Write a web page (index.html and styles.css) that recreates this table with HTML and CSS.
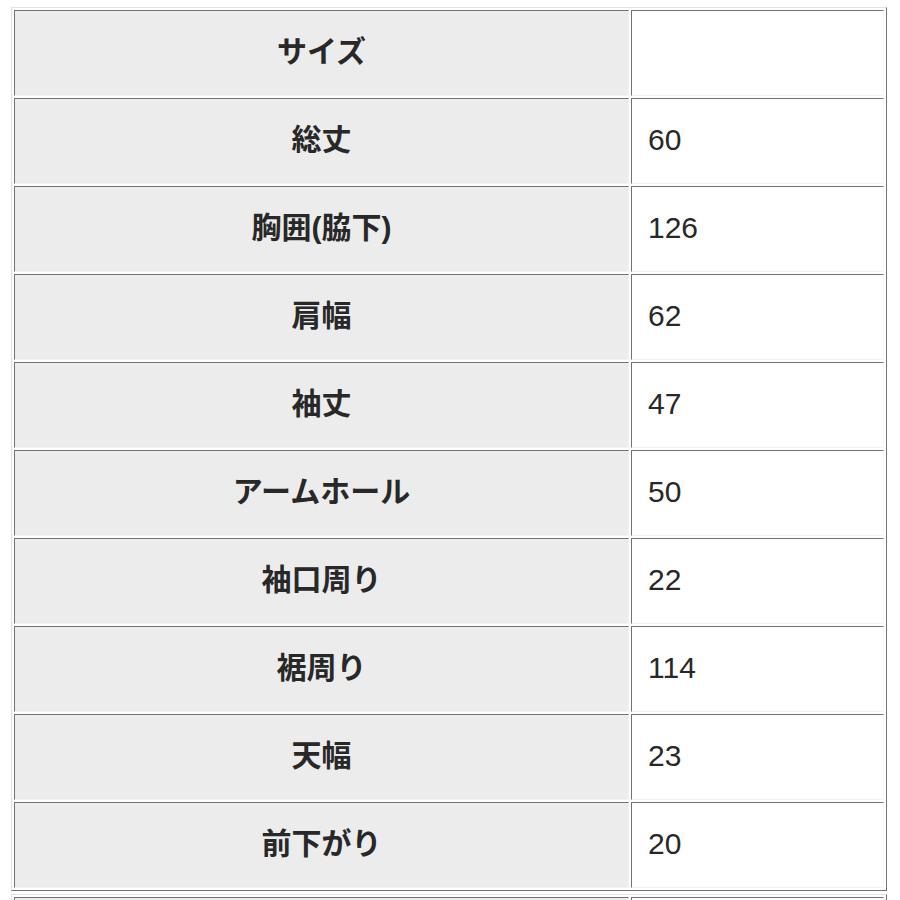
FILE: index.html
```html
<!DOCTYPE html>
<html lang="ja">
<head>
<meta charset="utf-8">
<title>サイズ表</title>
<link rel="stylesheet" href="styles.css">
</head>
<body>
<div class="page">
  <table class="size-table">
    <tbody>
      <tr><th>サイズ</th><td></td></tr>
      <tr><th>総丈</th><td>60</td></tr>
      <tr><th>胸囲(脇下)</th><td>126</td></tr>
      <tr><th>肩幅</th><td>62</td></tr>
      <tr><th>袖丈</th><td>47</td></tr>
      <tr><th>アームホール</th><td>50</td></tr>
      <tr><th>袖口周り</th><td>22</td></tr>
      <tr><th>裾周り</th><td>114</td></tr>
      <tr><th>天幅</th><td>23</td></tr>
      <tr><th>前下がり</th><td>20</td></tr>
    </tbody>
  </table>
  <table class="size-table next">
    <tbody>
      <tr><th></th><td></td></tr>
    </tbody>
  </table>
</div>
</body>
</html>
```

FILE: styles.css
```css
html, body {
  margin: 0;
  padding: 0;
  background: #ffffff;
}

.page {
  padding: 7px 0 0 11px;
}

.size-table {
  width: 876px;
  border-collapse: separate;
  border-spacing: 2px;
  border-style: solid;
  border-width: 1px;
  border-color: #e2e2e2 #727272 #727272 #e2e2e2;
  font-family: "Liberation Sans", "Noto Sans CJK JP", sans-serif;
  font-size: 30px;
  color: #282828;
  table-layout: fixed;
}

.size-table.next {
  margin-top: 3px;
}

.size-table th,
.size-table td {
  height: 84px;
  padding: 0;
  border-style: solid;
  border-width: 1px;
  border-color: #727272 #f2f2f2 #f2f2f2 #727272;
  vertical-align: middle;
}

.size-table th {
  width: 613px;
  height: 76px;
  padding-bottom: 8px;
  background: #ececec;
  font-weight: bold;
  text-align: center;
}

.size-table td {
  background: #ffffff;
  font-weight: normal;
  text-align: left;
  padding-left: 16px;
  height: 82px;
  padding-bottom: 2px;
}
```
